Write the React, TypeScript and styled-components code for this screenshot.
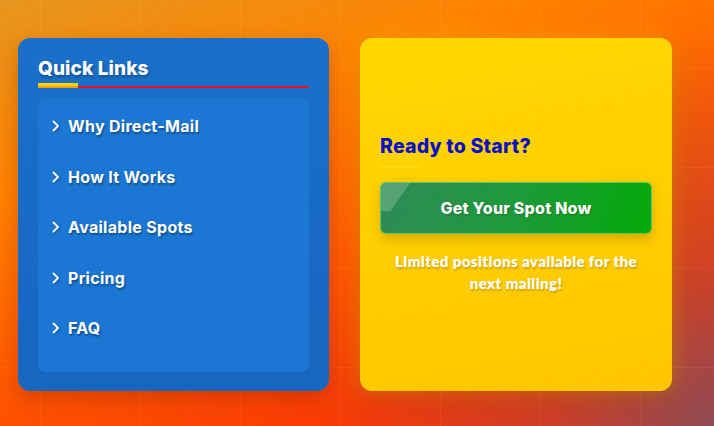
import React from "react";
import styled, { createGlobalStyle } from "styled-components";

const Global = createGlobalStyle`
  html, body { margin: 0; padding: 0; }
  body { width: 714px; height: 426px; overflow: hidden; font-family: "Inter", "Open Sans", sans-serif; }
  * { box-sizing: border-box; }
`;

const Page = styled.div`
  position: relative;
  width: 714px;
  height: 426px;
  padding: 38px 42px 36px 18px;
  display: grid;
  grid-template-columns: 311px 312px;
  column-gap: 31px;
  overflow: hidden;
  background:
    radial-gradient(circle at 100% 100%, rgba(120, 80, 100, 0.8) 0%, rgba(160, 70, 70, 0.45) 20%, rgba(255, 60, 0, 0) 48%),
    linear-gradient(160deg, #e6961f 0%, #ff8200 28%, #ff5a00 55%, #fa3a05 80%, #ee3512 100%);
`;

const GridLines = styled.div`
  position: absolute;
  inset: 0;
  pointer-events: none;
  background-image:
    linear-gradient(to right, rgba(255, 255, 255, 0.05) 1px, transparent 1px),
    linear-gradient(to bottom, rgba(255, 255, 255, 0.05) 1px, transparent 1px);
  background-size: 100px 100px;
  background-position: 40px 67px;
`;

const BlueCard = styled.section`
  position: relative;
  background: linear-gradient(180deg, #1a70c9 0%, #1766c0 100%);
  border-radius: 12px;
  padding: 20px 20px 19px;
  display: flex;
  flex-direction: column;
  box-shadow: 0 8px 20px rgba(120, 30, 0, 0.3);
`;

const Title = styled.h3`
  margin: 0;
  color: #fff;
  font-family: "Inter", sans-serif;
  font-weight: 800;
  font-size: 19px;
  line-height: 22px;
  letter-spacing: 0.1px;
  text-shadow: 1px 2px 3px rgba(0, 0, 0, 0.3);
`;

const Rule = styled.div`
  position: relative;
  margin-top: 6px;
  height: 2px;
  background: #e8141c;
  &::before {
    content: "";
    position: absolute;
    left: 0;
    bottom: 2px;
    width: 40px;
    height: 3px;
    background: #ffd400;
  }
  &::after {
    content: "";
    position: absolute;
    left: 0;
    top: 0;
    width: 40px;
    height: 2px;
    background: #f4a010;
  }
`;

const LinkBox = styled.ul`
  list-style: none;
  margin: 10px 0 0;
  padding: 3px 0 18px;
  flex: 1;
  background: #1b77d3;
  border-radius: 8px;
`;

const LinkItem = styled.li`
  height: 50.5px;
  display: flex;
  align-items: center;
  padding-left: 14px;
  gap: 8px;
  color: #fff;
  font-family: "Inter", sans-serif;
  font-weight: 700;
  font-size: 16px;
  letter-spacing: 0.3px;
  text-shadow: 1px 2px 2px rgba(0, 0, 0, 0.35);
`;

const Chevron = styled.svg`
  width: 8px;
  height: 12px;
  flex: none;
  filter: drop-shadow(1px 1px 1px rgba(0, 0, 0, 0.3));
`;

const YellowCard = styled.section`
  position: relative;
  background: linear-gradient(170deg, #ffd800 0%, #ffcf00 50%, #ffc600 100%);
  border-radius: 12px;
  padding: 20px;
  display: flex;
  flex-direction: column;
  justify-content: center;
  box-shadow: 0 0 24px rgba(255, 220, 0, 0.35), 0 8px 20px rgba(120, 30, 0, 0.25);
`;

const CtaTitle = styled.h3`
  margin: 0;
  color: #0a10c8;
  font-family: "Inter", sans-serif;
  font-weight: 800;
  font-size: 19.5px;
  line-height: 24px;
  letter-spacing: 0.2px;
  &::after {
    content: "";
    display: block;
    width: 40px;
    height: 2px;
    margin-top: 8px;
    background: rgba(255, 225, 40, 0.5);
  }
`;

const CtaButton = styled.button`
  position: relative;
  overflow: hidden;
  margin-top: 14px;
  height: 52px;
  width: 100%;
  border: 1.5px solid rgba(120, 220, 120, 0.7);
  border-radius: 6px;
  background: linear-gradient(100deg, #2e8b57 0%, #1d9a3a 50%, #04aa0a 100%);
  color: #fff;
  font-family: "Inter", sans-serif;
  font-weight: 800;
  font-size: 16px;
  letter-spacing: 0.2px;
  text-shadow: 1px 1px 2px rgba(0, 0, 0, 0.25);
  box-shadow: 0 5px 12px rgba(140, 110, 0, 0.35);
  &::before {
    content: "";
    position: absolute;
    left: -10px;
    top: -2px;
    width: 30px;
    height: 30px;
    background: rgba(255, 255, 255, 0.2);
    transform: skewX(-35deg);
  }
`;

const Note = styled.p`
  margin: 16px 0 0;
  text-align: center;
  color: #fff;
  font-family: "Lato", "Noto Sans", sans-serif;
  font-weight: 800;
  font-size: 15px;
  letter-spacing: 0.4px;
  line-height: 22px;
  padding: 0 6px;
  text-shadow: 1px 2px 2px rgba(120, 80, 0, 0.35);
`;

const links = ["Why Direct-Mail", "How It Works", "Available Spots", "Pricing", "FAQ"];

export default function App() {
  return (
    <>
      <Global />
      <Page>
        <GridLines />
        <BlueCard>
          <Title>Quick Links</Title>
          <Rule />
          <LinkBox>
            {links.map((l) => (
              <LinkItem key={l}>
                <Chevron viewBox="0 0 8 12">
                  <path d="M1.5 1.5 L6 6 L1.5 10.5" fill="none" stroke="#fff" strokeWidth="1.8" strokeLinecap="round" strokeLinejoin="round" />
                </Chevron>
                {l}
              </LinkItem>
            ))}
          </LinkBox>
        </BlueCard>
        <YellowCard>
          <CtaTitle>Ready to Start?</CtaTitle>
          <CtaButton>Get Your Spot Now</CtaButton>
          <Note>Limited positions available for the next mailing!</Note>
        </YellowCard>
      </Page>
    </>
  );
}
